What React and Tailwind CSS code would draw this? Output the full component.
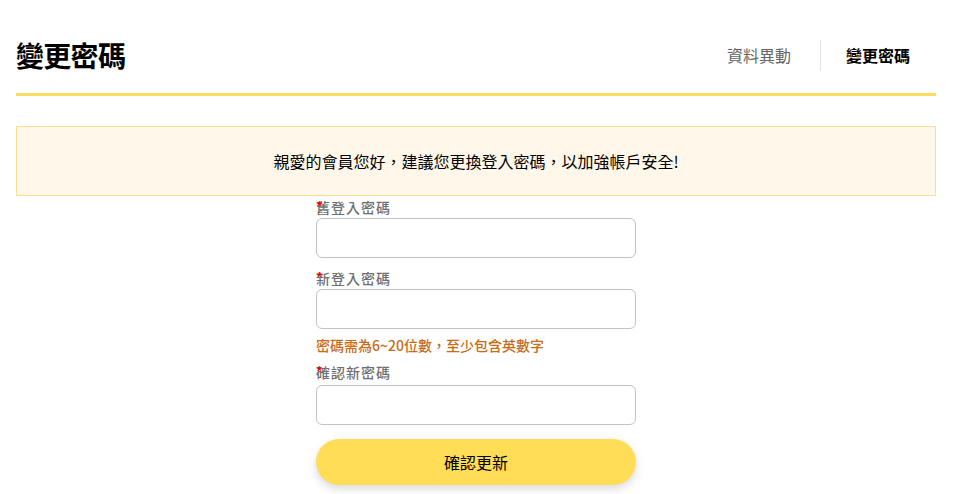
import React from 'react';

const fields = [
  { id: 'old', label: '舊登入密碼' },
  { id: 'new', label: '新登入密碼', hint: '密碼需為6~20位數，至少包含英數字' },
  { id: 'confirm', label: '確認新密碼' },
];

const App = () => {
  return (
    <div className="pl-4 bg-white min-h-[494px] text-black" style={{ fontFamily: '"Noto Sans CJK TC", "Noto Sans", sans-serif' }}>
      <div className="w-[920px]">
        {/* Header */}
        <div className="mt-5 h-[76px] pb-[3px] flex items-center justify-between border-b-[3px] border-[#fddb5e]">
          <h1 className="text-[28px] font-bold leading-none tracking-tight">變更密碼</h1>
          <nav className="flex items-center mr-[26px]">
            <a className="text-base text-[#666] pr-[29px] leading-none">資料異動</a>
            <span className="w-px h-[31px] bg-[#e2e2e2]"></span>
            <a className="text-base font-bold pl-[25px] leading-none">變更密碼</a>
          </nav>
        </div>

        {/* Notice */}
        <div className="mt-[30px] h-[70px] flex items-center justify-center bg-[#fff8ea] border border-[#fbdf97]">
          <p className="text-base">親愛的會員您好，建議您更換登入密碼，以加強帳戶安全!</p>
        </div>

        {/* Form */}
        <form className="w-[320px] mx-auto pt-px">
          {fields.map((f, i) => (
            <div key={f.id} className={i === 0 ? '' : i === 2 ? 'mt-[7px]' : 'mt-[10px]'}>
              <label className="relative block h-[20px] text-sm leading-[20px] tracking-[1px] font-medium text-[#6f6f6f]">
                <span className="absolute left-0 top-[2px] text-[#e00] text-sm leading-none">*</span>
                {f.label}
              </label>
              <input type="password" className={`${i === 2 ? 'mt-[3px]' : 'mt-px'} block w-full h-[40px] rounded-md border border-[#c2c2c2] bg-white px-3 outline-none`} />
              {f.hint && (
                <p className="mt-[6px] text-sm leading-[20px] font-medium text-[#c86a17]">{f.hint}</p>
              )}
            </div>
          ))}
          <button type="button" className="mt-[14px] w-full h-[46px] rounded-full bg-[#ffdd57] text-base shadow-[0_4px_10px_rgba(0,0,0,0.15)]">
            確認更新
          </button>
        </form>
      </div>
    </div>
  );
};

export default App;
